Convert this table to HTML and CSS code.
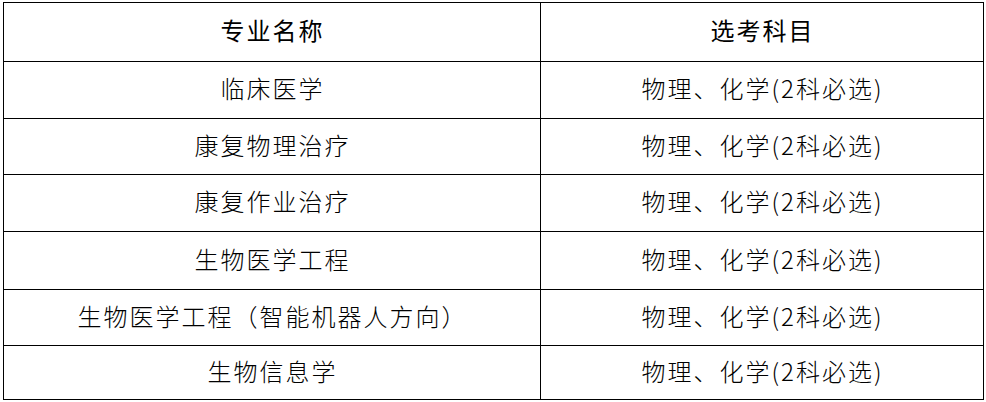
FILE: index.html
```html
<!DOCTYPE html>
<html lang="zh-CN">
<head>
<meta charset="utf-8">
<title>专业选考科目</title>
<link rel="stylesheet" href="styles.css">
</head>
<body>
<div class="table">
  <div class="cell head">专业名称</div>
  <div class="cell head">选考科目</div>
  <div class="cell">临床医学</div>
  <div class="cell">物理、化学(2科必选)</div>
  <div class="cell">康复物理治疗</div>
  <div class="cell">物理、化学(2科必选)</div>
  <div class="cell">康复作业治疗</div>
  <div class="cell">物理、化学(2科必选)</div>
  <div class="cell">生物医学工程</div>
  <div class="cell">物理、化学(2科必选)</div>
  <div class="cell">生物医学工程（智能机器人方向）</div>
  <div class="cell">物理、化学(2科必选)</div>
  <div class="cell">生物信息学</div>
  <div class="cell">物理、化学(2科必选)</div>
</div>
</body>
</html>
```
FILE: styles.css
```css
html, body {
  margin: 0;
  padding: 0;
  background: #ffffff;
}
body {
  padding: 2px 0 0 3px;
  font-family: "Noto Sans CJK SC", "Noto Sans", sans-serif;
  color: #000;
}
.table {
  display: grid;
  grid-template-columns: 536px 442px;
  grid-template-rows: 58px 56px 55px 56px 57px 55px 53px;
  gap: 1px;
  padding: 1px;
  background: #000;
  width: max-content;
}
.cell {
  background: #fff;
  display: flex;
  align-items: center;
  justify-content: center;
  font-size: 24px;
  font-weight: 300;
  letter-spacing: 2px;
  padding-left: 1px;
  padding-bottom: 4px;
  line-height: 1;
}
.cell.head {
  font-weight: 400;
}
```
